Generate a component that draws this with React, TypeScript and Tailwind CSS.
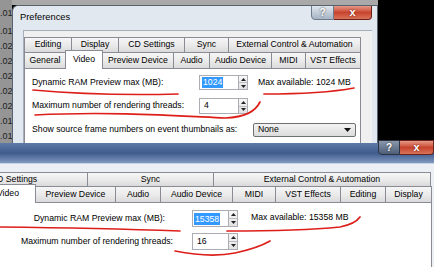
import React from 'react'

const UPPER_ROW1 = [
  { label: 'Editing', w: 'w-[48px]' },
  { label: 'Display', w: 'w-[48px]' },
  { label: 'CD Settings', w: 'w-[67px]' },
  { label: 'Sync', w: 'w-[45px]' },
  { label: 'External Control & Automation', w: 'w-[133px]' },
]

const UPPER_ROW2 = [
  { label: 'General', w: 'w-[42px]' },
  { label: 'Video', w: 'w-[38px]', active: true },
  { label: 'Preview Device', w: 'w-[72px]' },
  { label: 'Audio', w: 'w-[37px]' },
  { label: 'Audio Device', w: 'w-[63px]' },
  { label: 'MIDI', w: 'w-[35px]' },
  { label: 'VST Effects', w: 'w-[56px]' },
]

const LOWER_ROW1 = [
  { label: 'CD Settings', w: 'w-[148px]' },
  { label: 'Sync', w: 'w-[127px]' },
  { label: 'External Control & Automation', w: 'w-[218px]' },
]

const LOWER_ROW2 = [
  { label: 'General', w: 'w-[41px]' },
  { label: 'Video', w: 'w-[56px]', active: true },
  { label: 'Preview Device', w: 'w-[81px]' },
  { label: 'Audio', w: 'w-[46px]' },
  { label: 'Audio Device', w: 'w-[73px]' },
  { label: 'MIDI', w: 'w-[44px]' },
  { label: 'VST Effects', w: 'w-[66px]' },
  { label: 'Editing', w: 'w-[46px]' },
  { label: 'Display', w: 'w-[47px]' },
]

const NUMBERS = ['.01', '.01', '.02', '.02', '.02', '.02', '.02', '.01', '.01']

type TabDef = { label: string; w: string; active?: boolean }

function Tab({ tab, h, activeH }: { tab: TabDef; h: string; activeH?: string }) {
  if (tab.active) {
    return (
      <div
        className={`${tab.w} ${activeH} -ml-px -mt-[2px] -mb-px relative z-10 shrink-0 flex items-center justify-center border border-b-0 border-[#898c95] bg-white whitespace-nowrap overflow-hidden`}
      >
        {tab.label}
      </div>
    )
  }
  return (
    <div
      className={`${tab.w} ${h} -ml-px first:ml-0 shrink-0 flex items-center justify-center border border-b-0 border-[#898c95] bg-linear-to-b from-[#f6f6f6] via-[#ebebeb] to-[#dadada] whitespace-nowrap overflow-hidden`}
    >
      {tab.label}
    </div>
  )
}

function Spinner({ h }: { h: string }) {
  return (
    <div className={`w-[9px] ${h} shrink-0 flex flex-col border border-l-0 border-[#abadb3] bg-linear-to-b from-[#f7f7f7] to-[#e2e2e2]`}>
      <div className="flex-1 flex items-center justify-center border-b border-[#b9bcc2]">
        <svg width="5" height="3" viewBox="0 0 5 3">
          <path d="M0 3 L2.5 0 L5 3Z" fill="#222" />
        </svg>
      </div>
      <div className="flex-1 flex items-center justify-center">
        <svg width="5" height="3" viewBox="0 0 5 3">
          <path d="M0 0 L5 0 L2.5 3Z" fill="#222" />
        </svg>
      </div>
    </div>
  )
}

function CaptionButtons({ qw, xw, dark }: { qw: string; xw: string; dark?: boolean }) {
  return (
    <div className="flex shrink-0">
      <div
        className={`${qw} h-[15px] rounded-bl-[4px] border flex items-center justify-center text-white font-bold text-[10px] ${
          dark
            ? 'border-[#2c3442] bg-linear-to-b from-[#8a98ac] to-[#4e5e78]'
            : 'border-[#6d7b8d] bg-linear-to-b from-[#dfe6ee] to-[#a7b4c4]'
        }`}
      >
        <span className="[text-shadow:0_0_2px_#333]">?</span>
      </div>
      <div className={`${xw} h-[15px] rounded-br-[4px] border border-l-0 border-[#6a2218] bg-linear-to-b from-[#e59a88] via-[#c8432d] to-[#d8735a] flex items-center justify-center text-white font-bold text-[11px]`}>
        <span className="[text-shadow:0_0_2px_#5a140c] leading-none">x</span>
      </div>
    </div>
  )
}

function UpperWindow() {
  return (
    <div className="flex-1 flex flex-col border-l border-t border-r border-[#58626e] rounded-tl-[6px] bg-[#e2e8ef] overflow-hidden">
      <div className="h-[24px] flex justify-between shrink-0">
        <span className="pl-[7px] self-center text-[9.3px] text-black">Preferences</span>
        <div className="mr-[5px] -mt-px">
          <CaptionButtons qw="w-[23px]" xw="w-[38px]" />
        </div>
      </div>
      <div className="flex-1 flex pl-[10px] pr-[5px]">
        <div className="flex-1 border-l border-t border-[#a6b0bc] bg-[#f0f0f0] pt-[6px] flex flex-col">
          <div className="w-[337px] flex flex-col text-[8.7px] text-black">
            <div className="flex h-[15px]">
              {UPPER_ROW1.map((t) => (
                <Tab key={t.label} tab={t} h="h-[15px]" />
              ))}
            </div>
            <div className="flex items-end h-[16px]">
              {UPPER_ROW2.map((t) => (
                <Tab key={t.label} tab={t} h="h-[16px]" activeH="h-[19px]" />
              ))}
            </div>
            <div className="h-[80px] bg-white border border-[#898c95] pl-[7px] pt-[6px]">
              <div className="flex items-center h-[15px]">
                <span className="w-[167px] shrink-0">Dynamic RAM Preview max (MB):</span>
                <div className="w-[40px] h-[15px] shrink-0 border border-[#abadb3] bg-white flex items-center pl-[2px]">
                  <span className="bg-[#3399ff] text-white px-px leading-[11px]">1024</span>
                </div>
                <Spinner h="h-[15px]" />
                <span className="ml-[10px]">Max available: 1024 MB</span>
              </div>
              <div className="flex items-center h-[16px] mt-[8px]">
                <span className="w-[167px] shrink-0">Maximum number of rendering threads:</span>
                <div className="w-[40px] h-[16px] shrink-0 border border-[#abadb3] bg-white flex items-center pl-[4px]">
                  4
                </div>
                <Spinner h="h-[16px]" />
              </div>
              <div className="flex items-center h-[14px] mt-[9px]">
                <span className="w-[221px] shrink-0 whitespace-nowrap">Show source frame numbers on event thumbnails as:</span>
                <div className="w-[103px] h-[14px] shrink-0 rounded-[2px] border border-[#707070] bg-linear-to-b from-[#f3f3f3] to-[#dcdcdc] flex items-center justify-between pl-[4px] pr-[4px]">
                  <span>None</span>
                  <svg width="7" height="4" viewBox="0 0 7 4">
                    <path d="M0 0 L7 0 L3.5 4Z" fill="#111" />
                  </svg>
                </div>
              </div>
            </div>
          </div>
        </div>
      </div>
    </div>
  )
}

function LowerWindow() {
  return (
    <div className="h-[124px] flex flex-col">
      <div className="h-[21px] shrink-0 flex justify-end bg-linear-to-b from-[#5f7ba8] via-[#3e5b8c] to-[#8299c0] border-b border-[#c9d4e2]">
        <div className="-mt-[3px]">
          <CaptionButtons qw="w-[22px]" xw="w-[34px]" dark />
        </div>
      </div>
      <div className="flex-1 bg-[#eceff3] pt-[8px] -ml-[60px] flex flex-col text-[8.7px] text-black">
        <div className="w-[492px] flex flex-col flex-1">
          <div className="flex h-[14px]">
            {LOWER_ROW1.map((t) => (
              <Tab key={t.label} tab={t} h="h-[14px]" />
            ))}
          </div>
          <div className="flex items-end h-[16px]">
            {LOWER_ROW2.map((t) => (
              <Tab key={t.label} tab={t} h="h-[16px]" activeH="h-[19px]" />
            ))}
          </div>
          <div className="flex-1 bg-white border-t border-r border-[#898c95] pl-[60px] pt-[7px]">
            <div className="flex items-center h-[17px]">
              <span className="w-[192px] shrink-0 text-right pr-[27px]">Dynamic RAM Preview max (MB):</span>
              <div className="w-[37px] h-[17px] shrink-0 border border-[#abadb3] bg-white flex items-center pl-px">
                <span className="bg-[#3399ff] text-white px-px leading-[12px]">15358</span>
              </div>
              <Spinner h="h-[17px]" />
              <span className="ml-[13px] -mt-[2px]">Max available: 15358 MB</span>
            </div>
            <div className="flex items-center h-[17px] mt-[6px]">
              <span className="w-[192px] shrink-0 text-right pr-[19px]">Maximum number of rendering threads:</span>
              <div className="w-[37px] h-[17px] shrink-0 border border-[#abadb3] bg-white flex items-center pl-[4px]">
                16
              </div>
              <Spinner h="h-[17px]" />
            </div>
          </div>
        </div>
      </div>
    </div>
  )
}

function RedMarks() {
  return (
    <svg className="absolute inset-0 pointer-events-none" width="434" height="267" viewBox="0 0 434 267">
      <g fill="none" stroke="#dd1f1a" strokeWidth="1.7" strokeLinecap="round">
        <path d="M33,90 Q100,96 178,94" />
        <path d="M264,94 Q322,94 354,88" />
        <path d="M35,115 C110,111 180,116 225,118 C245,117 255,112 260,102" />
        <path d="M0,227 Q100,228 180,231" />
        <path d="M227,231 Q300,231 340,227 Q355,224 360,217" />
        <path d="M175,251 Q210,258 235,253 Q258,248 270,241" />
      </g>
    </svg>
  )
}

export default function App() {
  return (
    <div className="w-[434px] h-[267px] overflow-hidden bg-black relative font-['Liberation_Sans',Arial,sans-serif]">
      <div className="h-[143px] flex">
        <div className="w-[12px] shrink-0 overflow-hidden bg-[#959595] text-[9px] text-[#1c1c1c] pt-[6px]">
          {NUMBERS.map((n, i) => (
            <div key={i} className={`leading-[15px] whitespace-nowrap ${i === 0 ? 'mb-[3px]' : ''}`}>
              {n}
            </div>
          ))}
        </div>
        <div className="w-[366px] shrink-0 flex flex-col">
          <div className="h-[5px] shrink-0 bg-[#a9a9a9]" />
          <UpperWindow />
        </div>
        <div className="flex-1 bg-black" />
      </div>
      <LowerWindow />
      <RedMarks />
    </div>
  )
}
